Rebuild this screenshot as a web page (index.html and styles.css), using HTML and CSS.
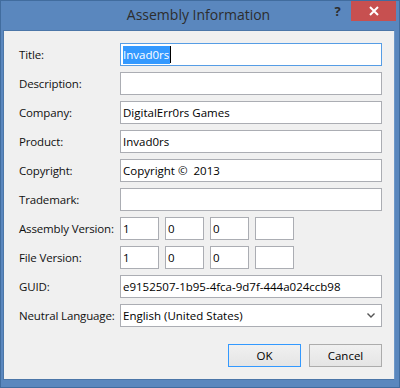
FILE: index.html
```html
<!DOCTYPE html>
<html lang="en">
<head>
    <meta charset="UTF-8">
    <title>Assembly Information</title>
    <link rel="stylesheet" href="styles.css">
</head>
<body>
    <div class="window">
        <div class="titlebar">
            <div></div>
            <div class="caption">Assembly Information</div>
            <div class="controls">
                <div class="help">?</div>
                <div class="close">
                    <svg width="10" height="10" viewBox="0 0 10 10">
                        <path d="M1 1L9 9M9 1L1 9" stroke="#fff" stroke-width="2"/>
                    </svg>
                </div>
            </div>
        </div>

        <div class="client">
            <div class="form">
                <label>Title:</label>
                <div class="box focus"><span class="sel">Invad0rs</span><span class="caret"></span></div>

                <label>Description:</label>
                <div class="box"></div>

                <label>Company:</label>
                <div class="box">DigitalErr0rs Games</div>

                <label>Product:</label>
                <div class="box">Invad0rs</div>

                <label>Copyright:</label>
                <div class="box">Copyright ©&nbsp; 2013</div>

                <label>Trademark:</label>
                <div class="box"></div>

                <label>Assembly Version:</label>
                <div class="version">
                    <div class="box small">1</div>
                    <div class="box small">0</div>
                    <div class="box small">0</div>
                    <div class="box small"></div>
                </div>

                <label>File Version:</label>
                <div class="version">
                    <div class="box small">1</div>
                    <div class="box small">0</div>
                    <div class="box small">0</div>
                    <div class="box small"></div>
                </div>

                <label>GUID:</label>
                <div class="box">e9152507-1b95-4fca-9d7f-444a024ccb98</div>

                <label>Neutral Language:</label>
                <div class="box combo">
                    <span>English (United States)</span>
                    <svg width="8" height="5" viewBox="0 0 8 5">
                        <path d="M0.5 0.5L4 4L7.5 0.5" stroke="#555" stroke-width="1.4" fill="none"/>
                    </svg>
                </div>
            </div>

            <div class="buttons">
                <button class="default">OK</button>
                <button>Cancel</button>
            </div>
        </div>
    </div>
</body>
</html>
```

FILE: styles.css
```css
body {
    margin: 0;
    font-family: "Segoe UI", "Open Sans", sans-serif;
    font-size: 11.5px;
}

.window {
    width: 400px;
    height: 388px;
    box-sizing: border-box;
    background: #5a87be;
    border: 1px solid #416c9e;
}

.titlebar {
    height: 29px;
    display: grid;
    grid-template-columns: 1fr auto 1fr;
}

.caption {
    font-size: 14px;
    color: #2d2d2d;
    padding-top: 4px;
    margin-left: -3px;
}

.controls {
    display: flex;
    justify-content: flex-end;
    margin-right: 3px;
}

.help {
    width: 27px;
    height: 20px;
    text-align: center;
    font-weight: bold;
    font-size: 13px;
    line-height: 20px;
    color: #2d2d2d;
}

.close {
    width: 45px;
    height: 20px;
    background: #c75050;
    display: flex;
    align-items: center;
    justify-content: center;
}

.client {
    margin-left: 2px;
    width: 392px;
    height: 350px;
    box-sizing: border-box;
    background: #f0f0f0;
    border: 1px solid #4b76a8;
    border-right-color: #6f98c8;
    padding: 12px 11px 0 15px;
}

.form {
    display: grid;
    grid-template-columns: 101px 262px;
    row-gap: 6px;
    align-items: center;
}

label {
    color: #111;
    white-space: nowrap;
    letter-spacing: -0.15px;
}

.box {
    height: 23px;
    box-sizing: border-box;
    border: 1px solid #abadb3;
    background: #fff;
    padding-left: 2px;
    line-height: 21px;
    color: #000;
    white-space: nowrap;
}

.box.focus {
    border-color: #569de5;
    display: flex;
    align-items: center;
}

.sel {
    background: #3399ff;
    color: #fff;
    line-height: 18px;
    padding-right: 1px;
}

.caret {
    width: 1px;
    height: 17px;
    background: #000;
}

.version {
    display: flex;
    gap: 6px;
}

.box.small {
    width: 39px;
}

.combo {
    display: flex;
    justify-content: space-between;
    align-items: center;
    padding-right: 6px;
}

.buttons {
    display: flex;
    justify-content: flex-end;
    gap: 8px;
    margin-top: 17px;
    margin-right: 1px;
}

button {
    width: 73px;
    height: 23px;
    font-family: inherit;
    font-size: 11.5px;
    color: #000;
    background: linear-gradient(#f0f0f0, #e5e5e5);
    border: 1px solid #acacac;
    padding: 0;
}

button.default {
    border-color: #3399ff;
}
```
